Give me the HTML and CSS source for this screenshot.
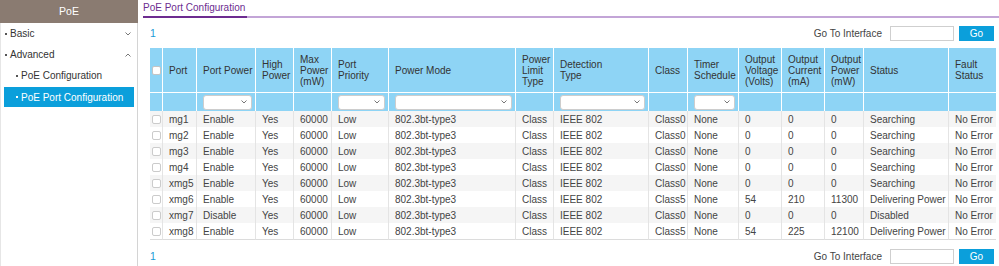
FILE: index.html
```html
<!DOCTYPE html>
<html>
<head>
<meta charset="utf-8">
<link rel="stylesheet" href="styles.css">
</head>
<body>
<div class="layout">
  <aside class="sidebar">
    <div class="side-head">PoE</div>
    <div class="side-body">
      <div class="nav-item lvl1"><span class="dot"></span><span class="label">Basic</span>
        <svg class="chev" width="6" height="4" viewBox="0 0 6 4"><path d="M0.5 0.5 L3 3 L5.5 0.5" fill="none" stroke="#777" stroke-width="1"/></svg></div>
      <div class="nav-item lvl1"><span class="dot"></span><span class="label">Advanced</span>
        <svg class="chev" width="6" height="4" viewBox="0 0 6 4"><path d="M0.5 3.5 L3 1 L5.5 3.5" fill="none" stroke="#777" stroke-width="1"/></svg></div>
      <div class="nav-item lvl2"><span class="dot"></span><span class="label">PoE Configuration</span></div>
      <div class="nav-item lvl2 active"><span class="dot"></span><span class="label">PoE Port Configuration</span></div>
    </div>
  </aside>
  <main class="main">
    <div class="tabbar"><div class="tab">PoE Port Configuration</div></div>
    <div class="content">
      <div class="toolbar">
        <span class="page">1</span>
        <div class="goto"><span>Go To Interface</span><span class="gin"></span><span class="gobtn">Go</span></div>
      </div>
      <table class="grid">
        <colgroup>
          <col class="c13"><col class="c34"><col class="c59"><col class="c38"><col class="c38"><col class="c57"><col class="c127"><col class="c38"><col class="c95"><col class="c39"><col class="c51"><col class="c43"><col class="c43"><col class="c39"><col class="c85"><col class="c47">
        </colgroup>
        <thead>
          <tr class="hrow">
            <th class="cbc"><span class="cb hcb"></span></th>
            <th>Port</th><th>Port Power</th><th>High Power</th><th>Max Power (mW)</th><th>Port Priority</th><th>Power Mode</th><th>Power Limit Type</th><th>Detection<br>Type</th><th>Class</th><th>Timer Schedule</th><th>Output Voltage (Volts)</th><th>Output Current (mA)</th><th>Output Power (mW)</th><th>Status</th><th>Fault Status</th>
          </tr>
          <tr class="frow">
            <th></th><th></th>
            <th><div class="sel"><svg width="6" height="4" viewBox="0 0 6 4"><path d="M0.5 0.5 L3 3 L5.5 0.5" fill="none" stroke="#777"/></svg></div></th>
            <th></th><th></th>
            <th><div class="sel"><svg width="6" height="4" viewBox="0 0 6 4"><path d="M0.5 0.5 L3 3 L5.5 0.5" fill="none" stroke="#777"/></svg></div></th>
            <th><div class="sel"><svg width="6" height="4" viewBox="0 0 6 4"><path d="M0.5 0.5 L3 3 L5.5 0.5" fill="none" stroke="#777"/></svg></div></th>
            <th></th>
            <th><div class="sel"><svg width="6" height="4" viewBox="0 0 6 4"><path d="M0.5 0.5 L3 3 L5.5 0.5" fill="none" stroke="#777"/></svg></div></th>
            <th></th>
            <th><div class="sel"><svg width="6" height="4" viewBox="0 0 6 4"><path d="M0.5 0.5 L3 3 L5.5 0.5" fill="none" stroke="#777"/></svg></div></th>
            <th></th><th></th><th></th><th></th><th></th>
          </tr>
        </thead>
        <tbody>
          <tr><td class="cbc"><span class="cb"></span></td><td>mg1</td><td>Enable</td><td>Yes</td><td>60000</td><td>Low</td><td>802.3bt-type3</td><td>Class</td><td>IEEE 802</td><td>Class0</td><td>None</td><td>0</td><td>0</td><td>0</td><td>Searching</td><td>No Error</td></tr>
          <tr><td class="cbc"><span class="cb"></span></td><td>mg2</td><td>Enable</td><td>Yes</td><td>60000</td><td>Low</td><td>802.3bt-type3</td><td>Class</td><td>IEEE 802</td><td>Class0</td><td>None</td><td>0</td><td>0</td><td>0</td><td>Searching</td><td>No Error</td></tr>
          <tr><td class="cbc"><span class="cb"></span></td><td>mg3</td><td>Enable</td><td>Yes</td><td>60000</td><td>Low</td><td>802.3bt-type3</td><td>Class</td><td>IEEE 802</td><td>Class0</td><td>None</td><td>0</td><td>0</td><td>0</td><td>Searching</td><td>No Error</td></tr>
          <tr><td class="cbc"><span class="cb"></span></td><td>mg4</td><td>Enable</td><td>Yes</td><td>60000</td><td>Low</td><td>802.3bt-type3</td><td>Class</td><td>IEEE 802</td><td>Class0</td><td>None</td><td>0</td><td>0</td><td>0</td><td>Searching</td><td>No Error</td></tr>
          <tr><td class="cbc"><span class="cb"></span></td><td>xmg5</td><td>Enable</td><td>Yes</td><td>60000</td><td>Low</td><td>802.3bt-type3</td><td>Class</td><td>IEEE 802</td><td>Class0</td><td>None</td><td>0</td><td>0</td><td>0</td><td>Searching</td><td>No Error</td></tr>
          <tr><td class="cbc"><span class="cb"></span></td><td>xmg6</td><td>Enable</td><td>Yes</td><td>60000</td><td>Low</td><td>802.3bt-type3</td><td>Class</td><td>IEEE 802</td><td>Class5</td><td>None</td><td>54</td><td>210</td><td>11300</td><td>Delivering Power</td><td>No Error</td></tr>
          <tr><td class="cbc"><span class="cb"></span></td><td>xmg7</td><td>Disable</td><td>Yes</td><td>60000</td><td>Low</td><td>802.3bt-type3</td><td>Class</td><td>IEEE 802</td><td>Class0</td><td>None</td><td>0</td><td>0</td><td>0</td><td>Disabled</td><td>No Error</td></tr>
          <tr><td class="cbc"><span class="cb"></span></td><td>xmg8</td><td>Enable</td><td>Yes</td><td>60000</td><td>Low</td><td>802.3bt-type3</td><td>Class</td><td>IEEE 802</td><td>Class5</td><td>None</td><td>54</td><td>225</td><td>12100</td><td>Delivering Power</td><td>No Error</td></tr>
        </tbody>
      </table>
      <div class="toolbar bottom">
        <span class="page">1</span>
        <div class="goto"><span>Go To Interface</span><span class="gin"></span><span class="gobtn">Go</span></div>
      </div>
    </div>
  </main>
</div>
</body>
</html>
```
FILE: styles.css
```css
html, body {
  margin: 0;
  padding: 0;
  background: #fff;
}
body {
  font-family: "Liberation Sans", Arial, Helvetica, sans-serif;
  font-size: 10px;
  color: #333;
  overflow: hidden;
}
.layout {
  display: flex;
  height: 266px;
}
.sidebar {
  width: 138px;
  flex: none;
  display: flex;
  flex-direction: column;
}
.side-head {
  height: 23px;
  line-height: 23px;
  background: #8a7b71;
  color: #fff;
  text-align: center;
  font-size: 10.5px;
}
.side-body {
  flex: 1;
  border-left: 1px solid #e6e6e6;
  border-right: 1px solid #d4d4d4;
  padding: 0 3px;
}
.nav-item {
  height: 21px;
  display: flex;
  align-items: center;
  color: #333;
  font-size: 10px;
}
.nav-item .dot {
  width: 2px;
  height: 2px;
  background: #555;
  margin-right: 3px;
  flex: none;
}
.lvl1 { padding-left: 1px; }
.lvl2 { padding-left: 12px; }
.chev {
  margin-left: auto;
  margin-right: 3px;
}
.nav-item.active {
  height: 20px;
  margin-top: 1px;
  background: #0b9fdb;
  color: #fff;
}
.nav-item.active .dot { background: #fff; }

.main {
  flex: 1;
  min-width: 0;
  margin-left: 5px;
}
.tabbar {
  display: flex;
  height: 18px;
  box-sizing: border-box;
  border-bottom: 2px solid #c3a5d7;
}
.tab {
  height: 18px;
  box-sizing: border-box;
  line-height: 16px;
  padding: 0 2px 0 0;
  border-bottom: 2px solid #6d2c90;
  color: #6d2c90;
  font-size: 10px;
}
.content {
  padding: 0 3px 0 7px;
}
.toolbar {
  margin-top: 7px;
  height: 16px;
  display: flex;
  align-items: center;
  justify-content: space-between;
}
.toolbar.bottom { margin-top: 8px; }
.page {
  color: #1b9ad6;
  font-size: 10.5px;
}
.goto {
  display: flex;
  align-items: center;
  margin-right: 2px;
  color: #444;
}
.gin {
  width: 64px;
  height: 15px;
  box-sizing: border-box;
  border: 1px solid #cfcfcf;
  background: #fff;
  margin-left: 8px;
}
.gobtn {
  width: 35px;
  height: 15px;
  margin-left: 5px;
  background: #0b9fdb;
  color: #fff;
  display: flex;
  align-items: center;
  justify-content: center;
}

.grid {
  margin-top: 7px;
  width: 846px;
  table-layout: fixed;
  border-collapse: separate;
  border-spacing: 0;
}
.c13 { width: 13px; } .c34 { width: 34px; } .c59 { width: 59px; }
.c38 { width: 38px; } .c57 { width: 57px; } .c127 { width: 127px; }
.c95 { width: 95px; } .c39 { width: 39px; } .c51 { width: 51px; }
.c43 { width: 43px; } .c85 { width: 85px; } .c47 { width: 47px; }

.grid th, .grid td {
  box-sizing: border-box;
}
.grid th {
  background: #8ed4f5;
  border-right: 1px solid #fff;
  font-weight: normal;
  text-align: left;
  vertical-align: middle;
  padding: 0 2px 0 6px;
  line-height: 11px;
  color: #333;
}
.grid th:last-child { border-right: none; }
.hrow th {
  height: 45px;
  border-bottom: 1px solid #fff;
}
.frow th { height: 18px; padding: 0 3px 0 6px; }
.grid th.cbc, .grid td.cbc { padding: 0; text-align: center; }
.sel {
  height: 15px;
  box-sizing: border-box;
  border: 1px solid #cdcdcd;
  border-radius: 3px;
  background: #fff;
  display: flex;
  align-items: center;
  justify-content: flex-end;
  padding-right: 4px;
}
.cb {
  display: inline-block;
  width: 9px;
  height: 9px;
  box-sizing: border-box;
  border: 1px solid #cbcbcb;
  border-radius: 2px;
  background: #fff;
  vertical-align: middle;
}
.hcb { border-color: #c4c4c4; }
.grid td {
  height: 16px;
  padding: 0 1px 0 6px;
  line-height: 15px;
  white-space: nowrap;
  color: #444;
  border-right: 1px solid #e4e4e4;
}
.grid td:last-child { border-right: none; }
.grid tbody tr:nth-child(odd) td { background: #f5f5f5; }
.grid tbody tr:last-child td { border-bottom: 1px solid #dcdcdc; height: 17px; }
```
